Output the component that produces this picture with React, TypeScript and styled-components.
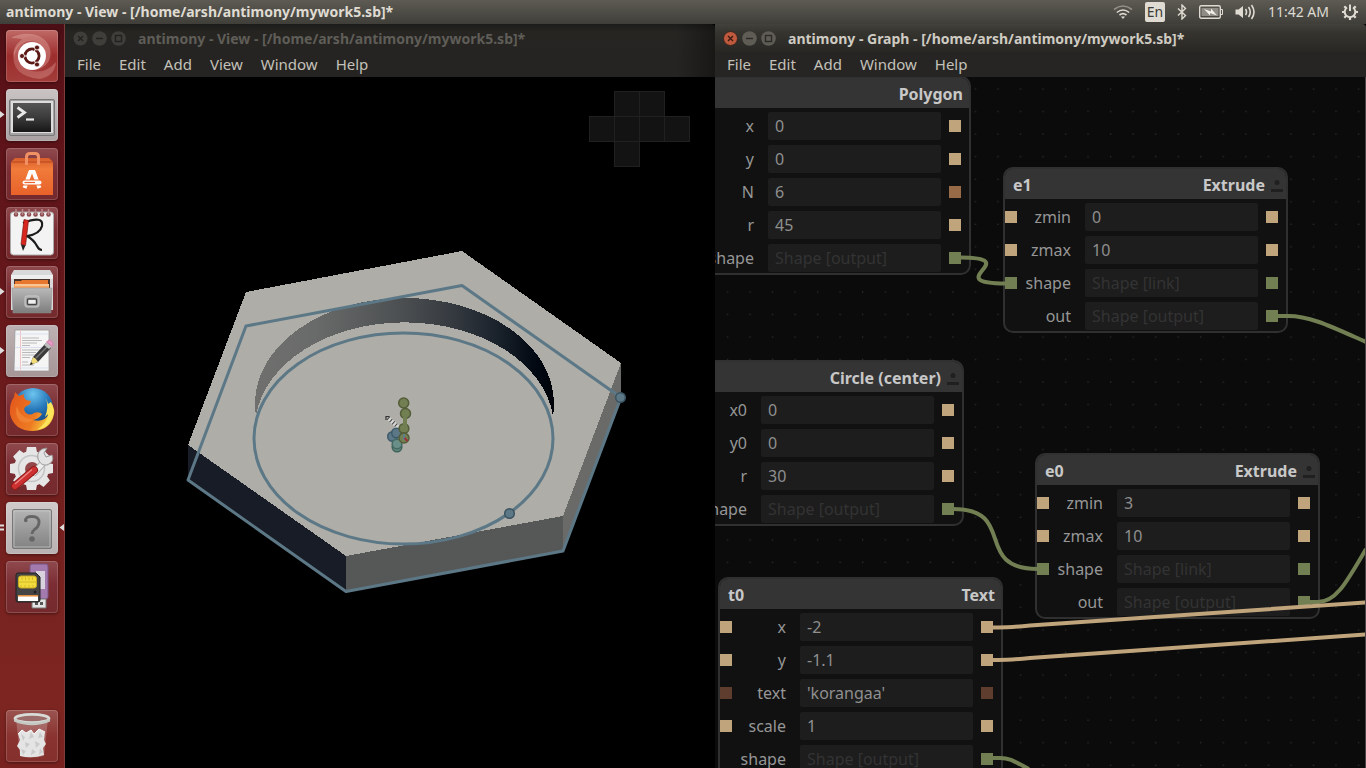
import React from "react";
import styled, { createGlobalStyle } from "styled-components";

const TAN = "#c0a47c";
const GREEN = "#727f52";
const BROWN = "#986b48";
const RUST = "#5f3d2e";
const STEEL = "#5c7886";

const GlobalStyle = createGlobalStyle`
  * { box-sizing: border-box; }
  html, body, #root { height: 100%; }
  body {
    margin: 0;
    overflow: hidden;
    background: #000;
    font-family: "Noto Sans", "Open Sans", sans-serif;
  }
  button, input { font: inherit; color: inherit; border: 0; margin: 0; padding: 0; background: none; }
  svg { display: block; }
`;

const Desktop = styled.div`
  display: flex;
  flex-direction: column;
  height: 100vh;
`;

const Panel = styled.header`
  display: flex;
  align-items: center;
  justify-content: space-between;
  flex: none;
  height: 24px;
  padding: 0 7px 0 6px;
  background: linear-gradient(#5d5b53, #3f3e39);
  color: #dfdbd2;
`;

const PanelTitle = styled.h1`
  margin: 0;
  font-size: 14px;
  font-weight: 700;
  line-height: 24px;
  white-space: nowrap;
`;

const Indicators = styled.div`
  display: flex;
  align-items: center;
  gap: 12px;
`;

const Indicator = styled.button`
  display: flex;
  align-items: center;
  font-size: 14px;
  line-height: 24px;
  white-space: nowrap;
`;

const Keyboard = styled(Indicator)`
  justify-content: center;
  width: 20px;
  height: 20px;
  border-radius: 2px;
  background: #dfdbd2;
  color: #3c3b37;
  font-size: 14px;
  line-height: 20px;
`;

const Workspace = styled.div`
  display: flex;
  flex: 1;
  min-height: 0;
`;

const Launcher = styled.nav`
  display: flex;
  flex-direction: column;
  flex: none;
  gap: 7px;
  width: 65px;
  padding: 6px 0 6px 6px;
  border-right: 1px solid #7d3c3a;
  background: linear-gradient(#4a0e14, #5a1218 8%, #6a1a1c 45%, #7d2621 90%, #782220);
`;

const Tile = styled.button<{ $tone?: string; $last?: boolean }>`
  position: relative;
  flex: none;
  width: 52px;
  height: 52px;
  margin-top: ${(p) => (p.$last ? "auto" : "0")};
  border-radius: 4px;
  background: ${(p) => p.$tone || "linear-gradient(#8f4a4e, #7b2d33 45%, #742a2c)"};
  box-shadow: inset 0 0 0 1px rgba(255, 255, 255, 0.16), 0 1px 3px rgba(0, 0, 0, 0.4);
`;

const Arrow = styled.span<{ $side: "left" | "right" }>`
  position: absolute;
  top: 21px;
  ${(p) => (p.$side === "left" ? "left: -6px;" : "right: -6px;")}
`;

const Window = styled.section<{ $grow: number }>`
  display: flex;
  flex-direction: column;
  flex: ${(p) => p.$grow} 1 0;
  min-width: 0;
`;

const shade = "linear-gradient(90deg, transparent 94%, rgba(0, 0, 0, 0.35))";

const TitleBar = styled.div<{ $active?: boolean }>`
  display: flex;
  align-items: center;
  flex: none;
  height: 28px;
  padding-left: 8px;
  border-radius: 0 4px 0 0;
  background: ${(p) =>
    p.$active
      ? "linear-gradient(#42413b, #35342f 30%, #282724)"
      : `${shade}, linear-gradient(#1c1c1a, #262522 30%, #252422)`};
  color: ${(p) => (p.$active ? "#cfcbc2" : "#5f5d57")};
`;

const WindowButtons = styled.div`
  display: flex;
  gap: 4px;
  margin-right: 12px;
`;

const WindowButton = styled.button`
  width: 15px;
  height: 15px;
`;

const WindowTitle = styled.h2`
  margin: 0;
  padding-top: 2px;
  font-size: 14px;
  font-weight: 700;
  line-height: 28px;
  white-space: nowrap;
`;

const MenuBar = styled.div<{ $active?: boolean }>`
  display: flex;
  align-items: center;
  flex: none;
  gap: 18px;
  height: 25px;
  padding-left: 12px;
  background: ${(p) => (p.$active ? "#262523" : `${shade}, #252422`)};
  color: #c4c1b9;
  font-size: 15px;
  line-height: 25px;
`;

const Scene = styled.div`
  flex: 1;
  min-height: 0;
  background: #000;
`;

const Canvas = styled.div`
  position: relative;
  flex: 1;
  min-height: 0;
  overflow: hidden;
  background: #0b0b0b;
  border-right: 1px solid #4a4447;
`;

const Overlay = styled.svg`
  position: absolute;
  inset: 0;
  pointer-events: none;
`;

const NodeBox = styled.article<{ $x: number; $y: number }>`
  position: absolute;
  left: ${(p) => p.$x}px;
  top: ${(p) => p.$y}px;
  width: 285px;
  padding-bottom: 1px;
  border: 2px solid #303030;
  border-radius: 10px;
  background: #111;
`;

const NodeHeader = styled.header`
  display: flex;
  align-items: center;
  gap: 5px;
  height: 30px;
  padding: 2px 2px 0 8px;
  background: #343434;
  border-radius: 8px 8px 0 0;
  color: #c8c8c8;
  font-size: 16px;
  font-weight: 700;
  line-height: 28px;
`;

const NodeKind = styled.span<{ $flush: boolean }>`
  margin-left: auto;
  padding-right: ${(p) => (p.$flush ? "4px" : "0")};
`;

const Rows = styled.div`
  display: grid;
  gap: 5px;
  padding-top: 4px;
`;

const Row = styled.div`
  display: grid;
  grid-template-columns: 12px 1fr 173px 20px;
  align-items: center;
  height: 28px;
  padding-right: 8px;
`;

const Port = styled.span<{ $color?: string }>`
  width: 12px;
  height: 12px;
  background: ${(p) => p.$color || "transparent"};
`;

const OutPort = styled(Port)`
  justify-self: end;
`;

const RowLabel = styled.label`
  padding-right: 14px;
  color: #969696;
  font-size: 16px;
  line-height: 28px;
  text-align: right;
`;

const Field = styled.input<{ $muted?: boolean }>`
  width: 173px;
  height: 28px;
  padding: 0 7px;
  border-radius: 2px;
  background: #1d1d1d;
  color: ${(p) => (p.$muted ? "#333" : "#8f8f8f")};
  font-size: 16px;
`;

type RowData = { label: string; value: string; left?: string; right?: string; muted?: boolean };
type NodeData = { name: string; kind: string; x: number; y: number; icon?: boolean; rows: RowData[] };

const output = (label: string): RowData => ({ label, value: "Shape [output]", right: GREEN, muted: true });
const num = (label: string, value: string, color = TAN): RowData => ({ label, value, left: color, right: color });

const nodes: NodeData[] = [
  {
    name: "p0", kind: "Polygon", x: -29, y: -1,
    rows: [num("x", "0"), num("y", "0"), num("N", "6", BROWN), num("r", "45"), output("shape")],
  },
  {
    name: "c0", kind: "Circle (center)", x: -36, y: 283, icon: true,
    rows: [num("x0", "0"), num("y0", "0"), num("r", "30"), output("shape")],
  },
  {
    name: "e1", kind: "Extrude", x: 288, y: 90, icon: true,
    rows: [
      num("zmin", "0"), num("zmax", "10"),
      { label: "shape", value: "Shape [link]", left: GREEN, right: GREEN, muted: true },
      output("out"),
    ],
  },
  {
    name: "e0", kind: "Extrude", x: 320, y: 376, icon: true,
    rows: [
      num("zmin", "3"), num("zmax", "10"),
      { label: "shape", value: "Shape [link]", left: GREEN, right: GREEN, muted: true },
      output("out"),
    ],
  },
  {
    name: "t0", kind: "Text", x: 3, y: 500,
    rows: [num("x", "-2"), num("y", "-1.1"), num("text", "'korangaa'", RUST), num("scale", "1"), output("shape")],
  },
];

function GraphNode({ node }: { node: NodeData }) {
  return (
    <NodeBox $x={node.x} $y={node.y}>
      <NodeHeader>
        <span>{node.name}</span>
        <NodeKind $flush={!node.icon}>{node.kind}</NodeKind>
        {node.icon && (
          <svg width="14" height="16" viewBox="-1 -2 14 16">
            <circle cx="6" cy="3.5" r="2.5" fill="#202020" />
            <rect y="10" width="12" height="3" fill="#202020" />
          </svg>
        )}
      </NodeHeader>
      <Rows>
        {node.rows.map((row) => {
          const id = `${node.name}-${row.label}`;
          return (
            <Row key={id}>
              <Port $color={row.left} />
              <RowLabel htmlFor={id}>{row.label}</RowLabel>
              <Field id={id} defaultValue={row.value} $muted={row.muted} readOnly={row.muted} />
              <OutPort $color={row.right} />
            </Row>
          );
        })}
      </Rows>
    </NodeBox>
  );
}

function Buttons({ active }: { active?: boolean }) {
  const ring = active ? "#5e5c55" : "#3f3e3a";
  const mark = active ? "#2b2a27" : "#22211f";
  return (
    <WindowButtons>
      <WindowButton aria-label="Close">
        <svg width="15" height="15" viewBox="0 0 15 15">
          <circle cx="7.5" cy="7.5" r="7" fill={active ? "#bf5a3f" : ring} stroke={active ? "#3a241c" : "none"} />
          <path d="M5 5l5 5M10 5l-5 5" stroke={active ? "#3c1a10" : mark} strokeWidth="1.4" />
        </svg>
      </WindowButton>
      <WindowButton aria-label="Minimize">
        <svg width="15" height="15" viewBox="0 0 15 15">
          <circle cx="7.5" cy="7.5" r="7.3" fill={ring} />
          <path d="M4 7.5h7" stroke={mark} strokeWidth="1.4" />
        </svg>
      </WindowButton>
      <WindowButton aria-label="Maximize">
        <svg width="15" height="15" viewBox="0 0 15 15">
          <circle cx="7.5" cy="7.5" r="7.3" fill={ring} />
          <rect x="4.5" y="4.5" width="6" height="6" fill="none" stroke={mark} strokeWidth="1.4" />
        </svg>
      </WindowButton>
    </WindowButtons>
  );
}

const viewMenus = ["File", "Edit", "Add", "View", "Window", "Help"];
const graphMenus = ["File", "Edit", "Add", "Window", "Help"];

function Chrome({ title, menus, active }: { title: string; menus: string[]; active?: boolean }) {
  return (
    <>
      <TitleBar $active={active}>
        <Buttons active={active} />
        <WindowTitle>{title}</WindowTitle>
      </TitleBar>
      <MenuBar $active={active}>
        {menus.map((m) => <button key={m}>{m}</button>)}
      </MenuBar>
    </>
  );
}

const Glyph = ({ children }: { children: React.ReactNode }) => (
  <svg width="52" height="52" viewBox="0 0 52 52">{children}</svg>
);

const UbuntuIcon = () => (
  <Glyph>
    <defs>
      <radialGradient id="swirl">
        <stop offset="0.3" stopColor="#e0a29c" />
        <stop offset="0.9" stopColor="#b04440" stopOpacity="0.2" />
      </radialGradient>
    </defs>
    <path d="M5 8C14 2 34 1 42 14C49 27 41 40 26 40Q42 36 40 24Q36 10 22 11Q11 12 8 28Q5 18 16 9Q10 8 5 8Z" fill="#e4aaa4" opacity="0.45" />
    <path d="M8 22Q4 46 34 49Q49 46 50 32Q40 44 26 41Q12 38 12 24Q14 12 26 10Q12 10 8 22Z" fill="#e4aaa4" opacity="0.35" />
    <circle cx="26" cy="26" r="20" fill="url(#swirl)" opacity="0.55" />
    <circle cx="26" cy="26" r="14" fill="#fff" />
    <circle cx="26" cy="26" r="7" fill="none" stroke="#5b1815" strokeWidth="3" />
    <path d="M26 26L17 26M26 26L30 18M26 26L30 34" stroke="#fff" strokeWidth="1" />
    <g fill="#5b1815" stroke="#fff" strokeWidth="0.8">
      <circle cx="16" cy="26" r="2.5" /><circle cx="31" cy="17.5" r="2.5" /><circle cx="31" cy="34.5" r="2.5" />
    </g>
    <circle cx="26" cy="26" r="5.4" fill="#fff" />
  </Glyph>
);

const TerminalIcon = () => (
  <Glyph>
    <defs>
      <linearGradient id="term" x1="0" y1="0" x2="0" y2="1">
        <stop offset="0" stopColor="#555" /><stop offset="0.5" stopColor="#3b3b3b" /><stop offset="1" stopColor="#171717" />
      </linearGradient>
    </defs>
    <rect x="3.5" y="10.5" width="45" height="36" rx="1.5" fill="#a5a3a3" stroke="#777" />
    <rect x="5" y="12" width="42" height="32" fill="#dedddd" />
    <rect x="7" y="14" width="38" height="29" fill="url(#term)" />
    <path d="M11.5 18.5l7 5l-7 5" fill="none" stroke="#e8e8e8" strokeWidth="2.8" />
    <path d="M20 30.5h8" stroke="#e8e8e8" strokeWidth="2.2" />
  </Glyph>
);

const SoftwareIcon = () => (
  <Glyph>
    <defs>
      <linearGradient id="bag" x1="0" y1="0" x2="0" y2="1">
        <stop offset="0" stopColor="#d65e2c" /><stop offset="0.3" stopColor="#f07b3a" /><stop offset="1" stopColor="#e8622a" />
      </linearGradient>
    </defs>
    <path d="M5 14L9 10H43L47 14V47H5Z" fill="url(#bag)" />
    <path d="M5 14H47" stroke="#b8451f" />
    <path d="M20.5 17V9Q20.5 5.5 24 5.5H29Q32.5 5.5 32.5 9V17" fill="none" stroke="#f09065" strokeWidth="3" />
    <path d="M18.5 40L24.5 23.5M33.5 40L27.5 23.5" fill="none" stroke="#fff" strokeWidth="4" />
    <path d="M23 22H29V25H23Z" fill="#fff" />
    <path d="M16 34.5H36" stroke="#ec6b30" strokeWidth="6" />
    <path d="M18.5 34.5H33.5" stroke="#fff" strokeWidth="4" strokeLinecap="round" />
    <path d="M18.5 34.5H29" stroke="#e8622a" strokeWidth="1.2" />
  </Glyph>
);

const NotesIcon = () => (
  <Glyph>
    <rect x="4.5" y="5" width="43" height="43" rx="3" fill="#f3f3f3" stroke="#aaa" />
    {[10, 16.5, 23, 29.5, 36, 42.5].map((x) => (
      <g key={x}>
        <circle cx={x} cy="7.5" r="2.3" fill="#8c4a4f" />
        <path d={`M${x} 2v6`} stroke="#b9888b" strokeWidth="1.5" />
      </g>
    ))}
    <path d="M17 16Q38 8 36 19Q34 27 21 29Q28 33 31 39Q33 43 36 43" fill="none" stroke="#1b1b1b" strokeWidth="2.2" />
    <path d="M18 12.5L22.5 13.5L19.5 38.5L15 37.5Z" fill="#d8261f" stroke="#7d120e" strokeWidth="0.7" />
    <path d="M15 37.5L19.5 38.5L17 44Z" fill="#222" />
  </Glyph>
);

const FilesIcon = () => (
  <Glyph>
    <defs>
      <linearGradient id="cab" x1="0" y1="0" x2="0" y2="1">
        <stop offset="0" stopColor="#b9b9b9" /><stop offset="1" stopColor="#7d7d7d" />
      </linearGradient>
    </defs>
    <path d="M8 4H44L47 9V44H5V9Z" fill="#d9d9d9" />
    <path d="M5 9H47V13H5Z" fill="#eee" />
    <rect x="8" y="13" width="36" height="11" fill="#4a3328" />
    <path d="M9 15H15L16 14H42V21H9Z" fill="#e5782e" />
    <path d="M8 18H43V23H8Z" fill="#f4a765" />
    <path d="M9 19H43" stroke="#ffe3c0" />
    <path d="M6 22H46L45 47H7Z" fill="url(#cab)" stroke="#8d8d8d" strokeWidth="0.5" />
    <rect x="19" y="30" width="14" height="11" rx="2" fill="#aaa" stroke="#ccc" />
    <rect x="21.5" y="33" width="9" height="5.5" rx="1" fill="#eee" stroke="#444" strokeWidth="1.4" />
  </Glyph>
);

const EditorIcon = () => (
  <Glyph>
    <path d="M9 5H43V46H8Z" fill="#f5f5f5" stroke="#999" strokeWidth="0.8" />
    <path d="M14.5 5V46" stroke="#f0c4c4" />
    <path d="M16 13H33M16 15.5H36M16 18H31M16 20.5H24M16 25H34M16 27.5H30M16 30H31M16 32.5H24M16 37H22M16 40H28" stroke="#a9a9a9" strokeWidth="0.8" />
    <path d="M9 9H42M9 22.5H42M9 43H42" stroke="#d8dfee" />
    <path d="M24 40L27 32L40 18L45 23L32 37Z" fill="#3a3a3a" />
    <path d="M30 33L43 20" stroke="#777" strokeWidth="1.5" />
    <path d="M24 40L27 32Q30 33 32 37Z" fill="#f2dc7a" /><path d="M24 40L25 37L27 39Z" fill="#222" />
    <path d="M38 20L41 17L46 21L43 24Z" fill="#bcbcbc" />
    <path d="M41 17L43 15.5Q46 15 47 19L46 21Z" fill="#e9a0c8" stroke="#d58bb5" strokeWidth="1.5" />
  </Glyph>
);

const FirefoxIcon = () => (
  <Glyph>
    <defs>
      <radialGradient id="globe" cx="0.5" cy="0.15" r="0.8">
        <stop offset="0" stopColor="#6cc4ee" /><stop offset="0.5" stopColor="#2778ba" /><stop offset="1" stopColor="#123e7d" />
      </radialGradient>
      <linearGradient id="fox" x1="0" y1="0" x2="1" y2="0.4">
        <stop offset="0" stopColor="#e2541b" /><stop offset="0.7" stopColor="#ee7b22" /><stop offset="1" stopColor="#f7c93c" />
      </linearGradient>
    </defs>
    <circle cx="27" cy="24" r="20" fill="url(#globe)" />
    <path d="M46 20Q49 26 48 30Q45 46 27 47Q8 47 4 30Q3 20 8 13L9 8L13 12L18 10Q17 13 20 16L25 17L24 20L19 23Q17 26 20 29Q24 32 28 29Q33 27 36 30Q33 35 27 36Q38 39 43 30Q44 26 46 20Z" fill="url(#fox)" />
    <path d="M40 14L42 20L45 18Q49 26 47 32Q43 44 31 46Q42 38 42 30L39 33Q43 24 40 14Z" fill="#fbe35c" />
    <path d="M15 30Q20 36 28 35Q22 41 14 37Q8 30 11 22Q12 27 15 30Z" fill="#f28a3a" opacity="0.7" />
  </Glyph>
);

const SettingsIcon = () => (
  <Glyph>
    <g fill="#e6e6e6">
      {[0, 45, 90, 135, 180, 225, 270, 315].map((a) => (
        <path key={a} d="M21 4H30L31.5 12H19.5Z" transform={`rotate(${a} 25.5 25.5)`} />
      ))}
      <circle cx="25.5" cy="25.5" r="17.5" />
    </g>
    <circle cx="25.5" cy="25.5" r="13" fill="none" stroke="#c4c4c4" strokeWidth="1.5" />
    <circle cx="26" cy="26" r="7" fill="#93474a" />
    <path d="M27 31L39 18" stroke="#aaa" strokeWidth="7" />
    <path d="M27 31L39 18" stroke="#ededed" strokeWidth="5" />
    <path d="M32 16Q30 6 41 5L38 10L40 14L46 12Q49 19 41 22Q35 23 32 16Z" fill="#e3e3e3" stroke="#999" />
    <path d="M9 43L28 27" stroke="#8f1a1a" strokeWidth="8" strokeLinecap="round" />
    <path d="M9 43L28 27" stroke="#cc3030" strokeWidth="6" strokeLinecap="round" />
    <path d="M9 41L26 26.5" stroke="#e88" strokeWidth="1.3" />
  </Glyph>
);

const UnknownIcon = () => (
  <Glyph>
    <defs>
      <linearGradient id="unk" x1="0" y1="0" x2="0" y2="1">
        <stop offset="0" stopColor="#b4b4b4" /><stop offset="1" stopColor="#828282" />
      </linearGradient>
    </defs>
    <rect x="6.5" y="7.5" width="39" height="39" rx="1.5" fill="url(#unk)" stroke="#777" />
    <rect x="8" y="9" width="36" height="36" fill="none" stroke="#c9c9c9" strokeWidth="0.7" />
    <path d="M19.5 19Q19 14.5 26 14.5Q33.5 14.5 33 21Q32.5 25 28.5 27.5Q26 29.5 26 32" fill="none" stroke="#666" strokeWidth="2.8" />
    <circle cx="19.8" cy="18.5" r="1.8" fill="#666" />
    <circle cx="26" cy="37" r="2.8" fill="#666" />
  </Glyph>
);

const DisksIcon = () => (
  <Glyph>
    <rect x="24" y="3" width="18" height="35" rx="2" fill="#a27aae" stroke="#7a5286" />
    <rect x="30" y="10" width="9" height="18" fill="#d9d3dd" />
    <path d="M26 38H40V47H26Z" fill="#e4e4e4" stroke="#777" /><path d="M29 41h3v3h-3zM34 41h3v3h-3z" fill="#555" />
    <path d="M10 14Q10 12 12 12H30L34 16V39Q34 41 32 41H12Q10 41 10 39Z" fill="#444" stroke="#222" />
    <rect x="12.5" y="15" width="18" height="12" rx="2.5" fill="#f2dc3c" stroke="#c9a824" />
    <path d="M16 16v3M19.5 16v3M23 16v3M26.5 16v3M15 26v-2M19 26v-2M23 26v-2M27 26v-2M13 21H30" stroke="#cdb02c" strokeWidth="0.8" />
    <circle cx="29" cy="31" r="1.5" fill="#222" />
    <rect x="12" y="35" width="20" height="5" fill="#fff" /><rect x="12" y="34" width="20" height="1.5" fill="#e08a3c" />
  </Glyph>
);

const TrashIcon = () => (
  <Glyph>
    <path d="M10 9L14 46Q26 49 38 46L42 9Z" fill="#ecdede" opacity="0.25" />
    <path d="M12 24L16 20L20 23L25 20L28 24L33 19L39 22L38 30L40 34L37 38L38 45Q26 49 14 46L14 40L11 36L14 30Z" fill="#e4e4e4" />
    <path d="M15 24l4 3l-2 4zM25 22l3 5l-5 2zM34 22l3 5l-5 1zM19 32l5 2l-4 4zM29 31l5 3l-4 4zM15 39l5 2l-3 4zM26 39l4 3l-5 3zM34 38l3 4l-4 3z" fill="#cbcbcb" />
    <path d="M12 24L16 20L20 23L25 20L28 24L33 19L39 22" fill="none" stroke="#fafafa" />
    <ellipse cx="26" cy="8.5" rx="17" ry="4.2" fill="#9b6c6a" stroke="#d7dad6" strokeWidth="2.8" />
    <path d="M8 9V11.5Q26 19 44 11.5V9Q26 16 8 9Z" fill="#c5c9c4" />
  </Glyph>
);

const silver = "linear-gradient(#c9c3c3, #aaa2a2)";

const apps: { name: string; icon: () => React.ReactElement; tone?: string; running?: boolean; focus?: boolean }[] = [
  { name: "Search your computer", icon: UbuntuIcon, tone: "linear-gradient(#c06a66, #9c2d2d 50%, #a33d3a)" },
  { name: "Terminal", icon: TerminalIcon, tone: silver, running: true },
  { name: "Software Center", icon: SoftwareIcon },
  { name: "Notes", icon: NotesIcon },
  { name: "Files", icon: FilesIcon, running: true },
  { name: "Text Editor", icon: EditorIcon, tone: "linear-gradient(#bdb2b3, #a59597)", running: true },
  { name: "Firefox", icon: FirefoxIcon },
  { name: "System Settings", icon: SettingsIcon },
  { name: "antimony", icon: UnknownIcon, tone: "linear-gradient(#d0caca, #b9b2b2)", focus: true },
  { name: "Disks", icon: DisksIcon },
];

function Dock() {
  return (
    <Launcher aria-label="Launcher">
      {apps.map(({ name, icon: Icon, tone, running, focus }) => (
        <Tile key={name} aria-label={name} $tone={tone}>
          <Icon />
          {running && (
            <Arrow $side="left">
              <svg width="5" height="9" viewBox="0 0 5 9"><path d="M0 1L4.5 4.5L0 8Z" fill="#ddd" /></svg>
            </Arrow>
          )}
          {focus && (
            <>
              <Arrow $side="left">
                <svg width="5" height="9" viewBox="0 0 5 9"><path d="M0 2.5H4M0 6.5H4" stroke="#ddd" strokeWidth="2" /></svg>
              </Arrow>
              <Arrow $side="right">
                <svg width="5" height="9" viewBox="0 0 5 9"><path d="M5 1L0.5 4.5L5 8Z" fill="#ddd" /></svg>
              </Arrow>
            </>
          )}
        </Tile>
      ))}
      <Tile aria-label="Trash" $last $tone="linear-gradient(#9b5450, #8a3330 50%, #84302c)"><TrashIcon /></Tile>
    </Launcher>
  );
}

/* The rendered solid: a hexagonal prism with a round pocket and its sketch outlines. */
function Model() {
  return (
    <svg width="100%" height="100%" viewBox="65 77 650 691" role="img" aria-label="Hexagonal solid with a round pocket">
      <defs>
        <linearGradient id="wall" gradientUnits="userSpaceOnUse" x1="255" y1="0" x2="554" y2="0">
          <stop offset="0" stopColor="#6f706e" /><stop offset="0.2" stopColor="#696b6a" /><stop offset="0.5" stopColor="#4b4e50" />
          <stop offset="0.66" stopColor="#353a40" /><stop offset="0.82" stopColor="#18202a" /><stop offset="0.93" stopColor="#030a14" />
          <stop offset="1" stopColor="#000208" />
        </linearGradient>
      </defs>
      <g fill="#131313" stroke="#202020">
        {[[614, 91], [639, 91], [589, 116], [614, 116], [639, 116], [664, 116], [614, 141]].map(([x, y]) => (
          <rect key={`${x}-${y}`} x={x + 0.5} y={y + 0.5} width="25" height="25" />
        ))}
      </g>
      <g shapeRendering="crispEdges">
        <path d="M188 445L346 556V592L188 480Z" fill="#171c26" />
        <path d="M346 556L563 516V551L346 592Z" fill="#565858" />
        <path d="M621 363V397L563 551V516Z" fill="#6a6b69" />
        <path d="M246 292L462 251L621 363L563 516L346 556L188 445Z" fill="#aeada8" />
        <path d="M256 415.7A149.5 105.5 0 0 1 255 403.5A149.5 105.5 0 0 1 554 403.5A149.5 105.5 0 0 1 553 415.7A149.5 105.5 0 0 0 256 415.7Z" fill="url(#wall)" />
      </g>
      <g fill="none" stroke={STEEL} strokeWidth="3">
        <path d="M246 326L462 285.5L621 397.5L563 551L346 591.5L188 480Z" strokeLinejoin="round" />
        <ellipse cx="403.5" cy="438.5" rx="149.5" ry="105.5" />
      </g>
      <g fill={STEEL} stroke="#3a525f" strokeWidth="1.5">
        <circle cx="620.5" cy="397.5" r="4.8" /><circle cx="509.5" cy="513.5" r="4.8" />
      </g>
      <path d="M388 418L398 427" stroke="#d6d6d4" strokeWidth="4" />
      <path d="M388 418L398 427" stroke="#444" strokeWidth="4" strokeDasharray="1 2.4" />
      <path d="M386 420V416.5H389.5" fill="none" stroke="#333" strokeWidth="1.2" />
      <g strokeWidth="1.5">
        <circle cx="392.5" cy="436.5" r="4.8" fill={STEEL} stroke="#3d5a6c" />
        <circle cx="396.5" cy="433" r="4.8" fill={STEEL} stroke="#3d5a6c" />
        <circle cx="397" cy="447" r="4.8" fill="#64897f" stroke="#3f625b" />
        <circle cx="397" cy="444" r="4.8" fill="#6a8f88" stroke="#456a63" />
        <g fill={GREEN} stroke="#535d38">
          <circle cx="403.7" cy="403" r="5" /><circle cx="405.5" cy="413.5" r="5" />
          <circle cx="404" cy="428.5" r="4.8" /><circle cx="404" cy="438" r="5" />
        </g>
        <path d="M405 416V430" stroke={GREEN} strokeWidth="4" />
        <path d="M404 434V440" stroke="#5a7fa0" /><path d="M404.5 438L407.5 441" stroke="#a03038" strokeWidth="2" />
      </g>
    </svg>
  );
}

function Dots() {
  return (
    <Overlay width="100%" height="100%">
      <defs>
        <pattern id="dots" width="22.54" height="22.54" patternUnits="userSpaceOnUse">
          <rect x="12" y="11.5" width="1" height="1" fill="#444" />
        </pattern>
      </defs>
      <rect width="100%" height="100%" fill="url(#dots)" />
    </Overlay>
  );
}

function Wires() {
  return (
    <Overlay width="651" height="691" viewBox="715 77 651 691" fill="none" strokeWidth="4">
      <g stroke={GREEN}>
        <path d="M960 257.5C1026 257.5 938 283.5 1006 283.5" />
        <path d="M953 509C1018 509 972 569 1038 569" />
        <path d="M1277 316H1288C1310 316 1330 326 1366 342" />
        <path d="M1308 602H1318C1336 602 1346 583 1366 549" />
        <path d="M991 758H1000C1012 758 1018 764 1029 769" />
      </g>
      <g stroke={TAN}>
        <path d="M991 627.5H998Q1010 627.5 1030 625.5L1366 602.5" />
        <path d="M991 660H998Q1010 660 1030 658L1366 634.5" />
      </g>
    </Overlay>
  );
}

function StatusArea() {
  return (
    <Indicators>
      <Indicator aria-label="Wireless network">
        <svg width="20" height="14" viewBox="0 0 20 14" fill="none" stroke="#dfdbd2" strokeWidth="1.6">
          <path d="M1 4.5Q10-2.5 19 4.5" opacity="0.45" /><path d="M3.8 7.5Q10 2.5 16.2 7.5" /><path d="M6.5 10Q10 7.3 13.5 10" />
          <path d="M8 11.5H12L10 14Z" fill="#dfdbd2" stroke="none" />
        </svg>
      </Indicator>
      <Keyboard aria-label="Keyboard layout">En</Keyboard>
      <Indicator aria-label="Bluetooth">
        <svg width="10" height="16" viewBox="0 0 10 16" fill="none" stroke="#dfdbd2" strokeWidth="1.4">
          <path d="M1 4.5L8.5 11.5L5 15V1L8.5 4.5L1 11.5" />
        </svg>
      </Indicator>
      <Indicator aria-label="Battery">
        <svg width="24" height="14" viewBox="0 -1 24 14">
          <rect x="0.7" y="-0.3" width="20.6" height="12.6" rx="1.5" fill="none" stroke="#dfdbd2" strokeWidth="1.4" />
          <rect x="2.5" y="2" width="17" height="8" fill="#8e8c84" />
          <path d="M22 3.5H23.5V8.5H22" fill="none" stroke="#dfdbd2" />
          <path d="M5 3L12 5.5V2.5L18 9.5L11 7V9.5Z" fill="#f2efe8" />
        </svg>
      </Indicator>
      <Indicator aria-label="Sound">
        <svg width="21" height="16" viewBox="0 0 21 16" fill="none" stroke="#dfdbd2" strokeWidth="1.6">
          <path d="M0.5 5.5H3.5L8 2V14L3.5 10.5H0.5Z" fill="#dfdbd2" stroke="none" />
          <path d="M10.5 5Q12.5 8 10.5 11M13.5 3Q17 8 13.5 13M16.5 1Q21.5 8 16.5 15" />
        </svg>
      </Indicator>
      <Indicator>11:42 AM</Indicator>
      <Indicator aria-label="Session">
        <svg width="18" height="18" viewBox="0 0 18 18" fill="none" stroke="#dfdbd2">
          <path d="M6 4.5A5.3 5.3 0 1 0 12 4.5" strokeWidth="2" />
          <path d="M9 1.5V8" strokeWidth="2" />
          <path d="M1 9H4M14 9H17M9 14V17M3.3 14.7L5.4 12.6M14.7 14.7L12.6 12.6M3.3 3.3L5.4 5.4M14.7 3.3L12.6 5.4" strokeWidth="2.2" />
        </svg>
      </Indicator>
    </Indicators>
  );
}

export default function App() {
  return (
    <Desktop>
      <GlobalStyle />
      <Panel>
        <PanelTitle>antimony - View - [/home/arsh/antimony/mywork5.sb]*</PanelTitle>
        <StatusArea />
      </Panel>
      <Workspace>
        <Dock />
        <Window $grow={650}>
          <Chrome title="antimony - View - [/home/arsh/antimony/mywork5.sb]*" menus={viewMenus} />
          <Scene><Model /></Scene>
        </Window>
        <Window $grow={651}>
          <Chrome active title="antimony - Graph - [/home/arsh/antimony/mywork5.sb]*" menus={graphMenus} />
          <Canvas>
            <Dots />
            {nodes.map((node) => <GraphNode key={node.name} node={node} />)}
            <Wires />
          </Canvas>
        </Window>
      </Workspace>
    </Desktop>
  );
}
